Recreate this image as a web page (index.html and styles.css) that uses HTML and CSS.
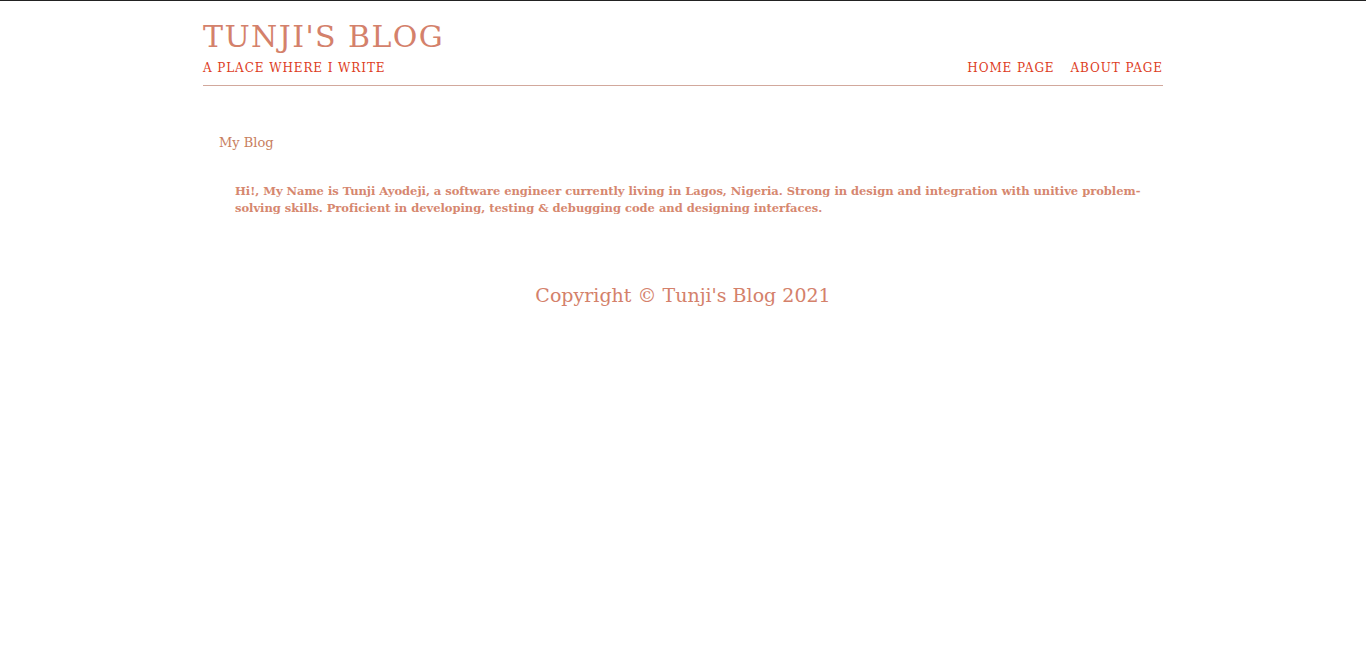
FILE: index.html
```html
<!DOCTYPE html>
<html>
<head>
<meta charset="utf-8">
<title>Tunji's Blog</title>
<link rel="stylesheet" href="styles.css">
</head>
<body>
<div class="topline"></div>
<div class="wrap">
  <header class="header">
    <h1 class="title">TUNJI'S BLOG</h1>
    <div class="subrow">
      <span class="tagline">A PLACE WHERE I WRITE</span>
      <nav class="nav">
        <a href="#">HOME PAGE</a>
        <a href="#">ABOUT PAGE</a>
      </nav>
    </div>
  </header>
  <main class="main">
    <h2 class="section-title">My Blog</h2>
    <p class="intro">Hi!, My Name is Tunji Ayodeji, a software engineer currently living in Lagos, Nigeria. Strong in design and integration with unitive problem-solving skills. Proficient in developing, testing &amp; debugging code and designing interfaces.</p>
  </main>
  <footer class="footer">Copyright © Tunji's Blog 2021</footer>
</div>
</body>
</html>
```
FILE: styles.css
```css
html, body {
  margin: 0;
  padding: 0;
  background: #fff;
}
body {
  font-family: "DejaVu Serif", serif;
  color: #d4816b;
}
.topline {
  height: 1px;
  background: #222;
}
.wrap {
  width: 960px;
  margin: 0 auto;
}
.header {
  border-bottom: 1px solid #d2a89c;
  padding-top: 18px;
  padding-bottom: 9px;
}
.title {
  margin: 0;
  font-size: 30px;
  font-weight: normal;
  line-height: 36px;
  color: #d4816b;
  letter-spacing: 1.4px;
}
.subrow {
  display: flex;
  justify-content: space-between;
  align-items: baseline;
  margin-top: 5px;
  line-height: 16px;
}
.tagline, .nav a {
  font-size: 12px;
  color: #dd3d1e;
  text-decoration: none;
  letter-spacing: 0.9px;
}
.nav {
  display: flex;
  gap: 16px;
}
.main {
  padding: 48px 16px 0;
}
.section-title {
  margin: 0;
  font-size: 13px;
  font-weight: normal;
  color: #c87e5e;
  line-height: 17px;
}
.intro {
  margin: 32px 0 0 16px;
  font-size: 11.5px;
  line-height: 17px;
  font-weight: bold;
  letter-spacing: -0.02px;
  color: #d6876f;
}
.footer {
  text-align: center;
  margin-top: 66px;
  font-size: 19px;
  line-height: 24px;
  color: #d4816b;
}
```
